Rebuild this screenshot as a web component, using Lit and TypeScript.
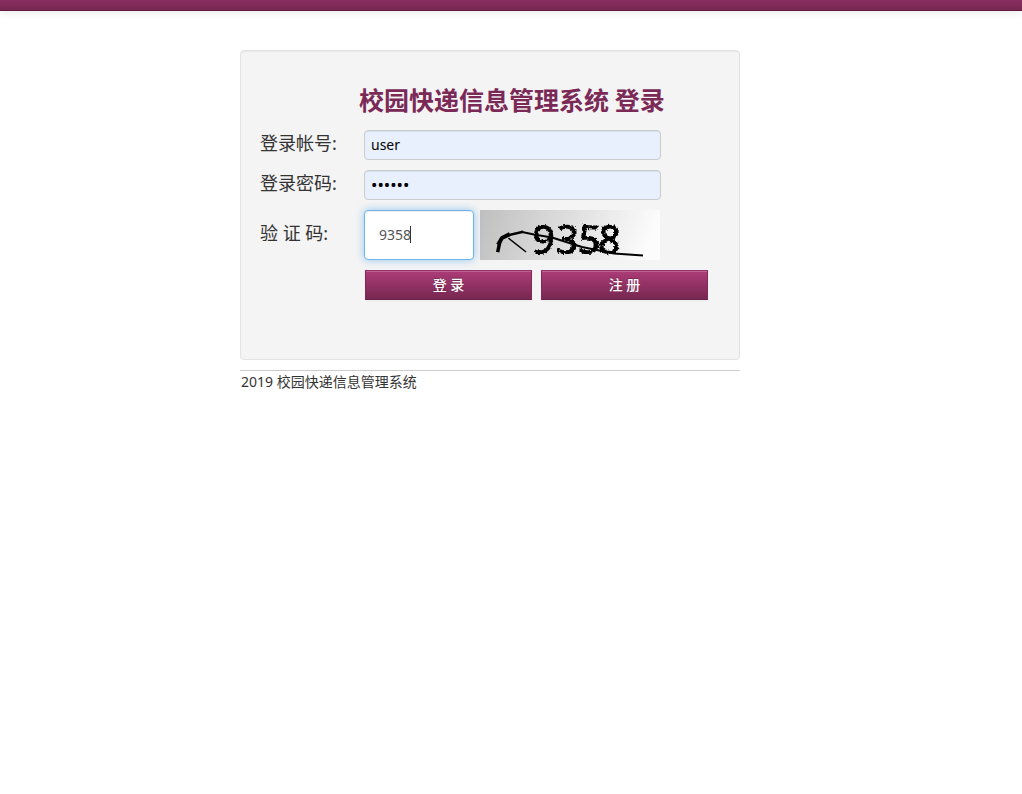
import { LitElement, html, css } from "lit";
import { customElement, query } from "lit/decorators.js";

@customElement("captcha-image")
class CaptchaImage extends LitElement {
  static styles = css`
    :host { display: block; width: 180px; height: 50px; }
    svg { display: block; width: 100%; height: 100%; overflow: visible; }
    .code {
      font: 600 40px "Open Sans", "Noto Sans", sans-serif;
      fill: #000;
    }
  `;

  render() {
    return html`
      <svg viewBox="0 0 180 50" role="img" aria-label="验证码">
        <defs>
          <linearGradient id="bg" x2="1" y2="0.1">
            <stop offset="0" stop-color="#bfbfbf" />
            <stop offset="1" stop-color="#fcfcfc" />
          </linearGradient>
          <filter id="rough" x="-10%" y="-20%" width="120%" height="140%">
            <feTurbulence type="fractalNoise" baseFrequency="0.5" numOctaves="2" seed="4" />
            <feDisplacementMap in="SourceGraphic" scale="4" xChannelSelector="R" yChannelSelector="G" />
            <feGaussianBlur stdDeviation="0.5" />
          </filter>
        </defs>
        <rect width="180" height="50" fill="url(#bg)" />
        <g filter="url(#rough)">
          <text class="code" x="51 75 97 117" y="43" rotate="4 4 4 4">9358</text>
        </g>
        <g fill="none" stroke="#000" stroke-linecap="square" stroke-linejoin="round">
          <path d="M18 40.500L19.500 33.500" stroke-width="3.500" />
          <path d="M19 33L22 28L28 25" stroke-width="4" />
          <path d="M27 25.500L42 22" stroke-width="2.500" />
          <path d="M42 22L54 24.500L72 27.500L102 37L134 43.500L162 45.500" stroke-width="2" />
          <path d="M29 28.500L45.500 41.500" stroke-width="1.500" />
        </g>
      </svg>
    `;
  }
}

@customElement("app-root")
class AppRoot extends LitElement {
  @query("#code") codeInput!: HTMLInputElement;

  static styles = css`
    :host {
      display: block;
      color: #333;
      font: 14px/20px "Noto Sans", "Noto Sans CJK SC", sans-serif;
    }
    * { box-sizing: border-box; }
    .navbar {
      height: 11px;
      background: linear-gradient(#8a2f62, #762850);
      border-bottom: 1px solid #5e1d40;
      box-shadow: 0 1px 10px rgba(0, 0, 0, 0.1);
    }
    .page {
      max-width: 500px;
      margin: 39px 0 0 240px;
    }
    .well {
      padding: 33px 19px 59px;
      border: 1px solid #e3e3e3;
      border-radius: 4px;
      background: #f4f4f4;
      box-shadow: inset 0 1px 1px rgba(0, 0, 0, 0.05);
    }
    h1 {
      margin: 0 0 16px 99px;
      color: #7b2a57;
      font: bold 25px/30px "Noto Sans CJK SC", sans-serif;
      white-space: nowrap;
    }
    form { display: grid; gap: 10px; }
    .row {
      display: grid;
      grid-template-columns: 104px 297px;
      align-items: center;
    }
    label { font-size: 18px; line-height: 20px; margin-bottom: 5px; }
    input {
      width: 100%;
      height: 30px;
      padding: 3px 6px 5px;
      border: 1px solid #ccc;
      border-radius: 4px;
      background: #e8f0fe;
      color: #000;
      font: inherit;
      outline: 0;
      box-shadow: inset 0 1px 1px rgba(0, 0, 0, 0.075);
    }
    input[type="password"] { font-size: 17px; }
    .verify { display: flex; gap: 6px; }
    .field { position: relative; }
    .field input {
      display: block;
      width: 110px;
      height: 50px;
      padding: 0 14px 2px;
      background: #fff;
      color: #555;
      caret-color: transparent;
    }
    .field input:focus {
      border-color: #6eb5ee;
      box-shadow: inset 0 1px 1px rgba(0, 0, 0, 0.075), 0 0 8px rgba(82, 168, 236, 0.6);
    }
    .caret {
      position: absolute;
      top: 16px;
      left: 46px;
      width: 1px;
      height: 17px;
      background: #333;
      pointer-events: none;
    }
    .actions { display: flex; gap: 9px; margin-left: 105px; }
    button {
      width: 167px;
      height: 30px;
      padding: 0;
      border: 1px solid;
      border-color: #94316a #83295a #6b2449;
      border-radius: 0;
      background: linear-gradient(#ad3c78, #762850);
      color: #fff;
      font: inherit;
      font-weight: 500;
      text-shadow: 0 -1px 0 rgba(0, 0, 0, 0.25);
      box-shadow: inset 0 1px 0 rgba(255, 255, 255, 0.2), 0 1px 2px rgba(0, 0, 0, 0.05);
    }
    footer {
      margin-top: 10px;
      padding: 1px;
      border-top: 1px solid #ccc;
    }
  `;

  firstUpdated() {
    this.codeInput.focus();
    this.codeInput.setSelectionRange(4, 4);
  }

  render() {
    return html`
      <div class="navbar"></div>
      <div class="page">
        <main class="well">
          <h1>校园快递信息管理系统 登录</h1>
          <form @submit=${(e: Event) => e.preventDefault()}>
            <div class="row">
              <label for="user">登录帐号:</label>
              <input id="user" type="text" .value=${"user"} />
            </div>
            <div class="row">
              <label for="password">登录密码:</label>
              <input id="password" type="password" .value=${"123456"} />
            </div>
            <div class="row">
              <label for="code">验 证 码:</label>
              <div class="verify">
                <div class="field">
                  <input id="code" type="text" maxlength="4" .value=${"9358"} />
                  <span class="caret"></span>
                </div>
                <captcha-image></captcha-image>
              </div>
            </div>
            <div class="actions">
              <button type="submit">登 录</button>
              <button type="button">注 册</button>
            </div>
          </form>
        </main>
        <footer>2019 校园快递信息管理系统</footer>
      </div>
    `;
  }
}
